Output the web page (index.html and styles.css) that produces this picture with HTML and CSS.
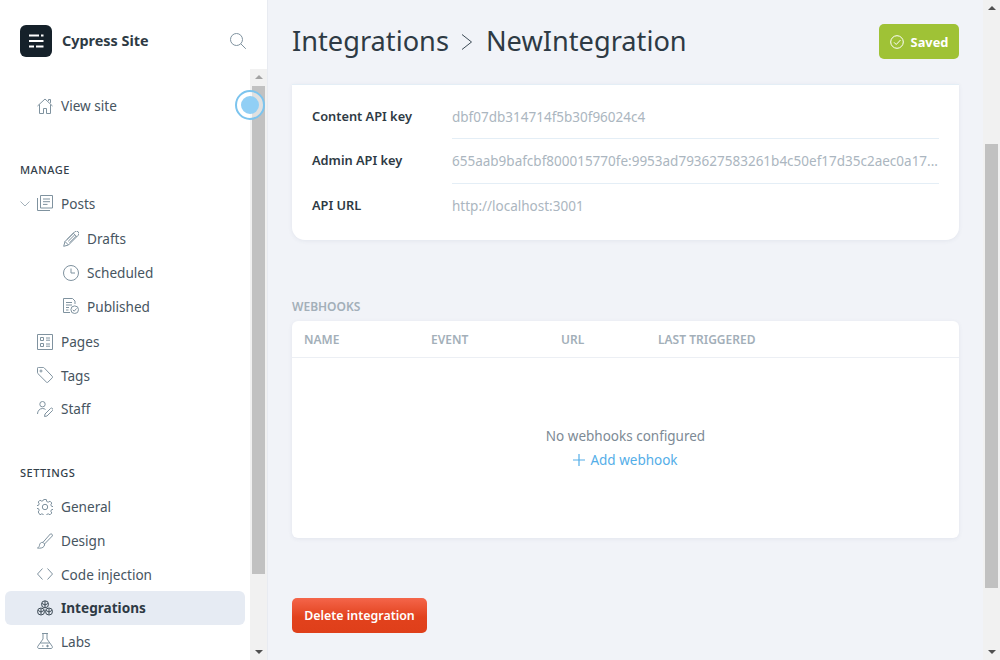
FILE: index.html
```html
<!DOCTYPE html>
<html lang="en">
<head>
<meta charset="utf-8">
<title>Integrations</title>
<link rel="stylesheet" href="styles.css">
</head>
<body>
<div class="app">
  <aside class="sidebar">
    <header class="brand">
      <div class="logo">
        <svg viewBox="0 0 32 32" width="32" height="32"><path d="M9 10.500h10M21 10.500h2.500M9 16h14.500M9 21.500h5M16 21.500h7.500" class="logo-lines"/></svg>
      </div>
      <span class="brand-name">Cypress Site</span>
      <svg class="search" viewBox="0 0 16 16" width="16" height="16"><circle cx="6.500" cy="6.500" r="6"/><path d="M10.800 10.800l5 5"/></svg>
    </header>
    <div class="side-body">
      <nav class="nav">
        <div class="item top">
          <svg class="ic" viewBox="0 0 16 16"><path d="M.5 8L8 1l7.500 7M2.500 6.500v9h4v-5h3v5h4v-9M11.500 3V1.500h2v3.400"/></svg>
          <span>View site</span>
        </div>
        <h4 class="label manage">MANAGE</h4>
        <div class="item">
          <svg class="chev" viewBox="0 0 10 6"><path d="M.5.500L5 5 9.500.5"/></svg>
          <svg class="ic" viewBox="0 0 16 16"><path d="M3.500.5h12v12.500h-12zM.5 3v12.500h12.500M6 4h7M6 6.700h7M6 9.400h4.500"/></svg>
          <span>Posts</span>
        </div>
        <div class="sub">
          <div class="item">
            <svg class="ic" viewBox="0 0 16 16"><path d="M.7 15.300l1.300-4.800L11.700.8a1.700 1.700 0 0 1 3.500 3.500L5.500 14zM2 10.500L5.500 14M10.300 2.200l3.500 3.500M3.700 8.800l6.800-6.800M5.200 10.300L12 3.500M6.500 11.800l6.800-6.800"/></svg>
            <span>Drafts</span>
          </div>
          <div class="item">
            <svg class="ic" viewBox="0 0 16 16"><circle cx="8" cy="8" r="7.500"/><path d="M8 3.500V8h4"/></svg>
            <span>Scheduled</span>
          </div>
          <div class="item">
            <svg class="ic" viewBox="0 0 16 16"><path d="M7 14.500H.5V.5h9l2.500 2.500v3M3 4.500h6M3 7h6M3 9.500h3M3 12h2.500"/><circle cx="11.700" cy="11.700" r="3.800"/><path d="M9.800 11.800l1.400 1.400 2.300-2.700"/></svg>
            <span>Published</span>
          </div>
        </div>
        <div class="item">
          <svg class="ic" viewBox="0 0 16 16"><path d="M.5.5h15v15H.5zM3.500 3.500h3v3h-3zM3.500 9.500h3v3h-3zM9 4h4M9 6.200h4M9 10h4M9 12.200h4"/></svg>
          <span>Pages</span>
        </div>
        <div class="item">
          <svg class="ic" viewBox="0 0 16 16"><path d="M.5 1.200v4.600a1 1 0 0 0 .3.700l8.700 8.700a1 1 0 0 0 1.400 0l4.400-4.400a1 1 0 0 0 0-1.400L7 .7a1 1 0 0 0-.7-.3H1.300a.8.8 0 0 0-.8.800z"/><circle cx="4" cy="4" r="1"/></svg>
          <span>Tags</span>
        </div>
        <div class="item">
          <svg class="ic" viewBox="0 0 16 16"><circle cx="5.500" cy="3.200" r="2.700"/><path d="M.5 13c0-3 2-5.500 5-5.500 1.200 0 2.200.3 3 1M7.500 15.500l.5-2.500 5.500-5.500a1.300 1.300 0 0 1 2 2L10 15z"/></svg>
          <span>Staff</span>
        </div>
        <h4 class="label settings">SETTINGS</h4>
        <div class="item">
          <svg class="ic" viewBox="0 0 16 16"><circle cx="8" cy="8" r="2.700"/><path d="M6.700.5h2.600l.4 2 1.500.7 1.800-1 1.800 1.800-1 1.800.7 1.500 2 .4v2.600l-2 .4-.7 1.500 1 1.800-1.800 1.800-1.800-1-1.500.7-.4 2H6.700l-.4-2-1.500-.7-1.800 1L1.200 13l1-1.800-.7-1.500-2-.4V6.700l2-.4.700-1.500-1-1.800L3 1.200l1.800 1 1.500-.7z"/></svg>
          <span>General</span>
        </div>
        <div class="item">
          <svg class="ic" viewBox="0 0 16 16"><path d="M6 9.300L13.300 1a1.500 1.500 0 0 1 2 2L7.500 11M6 9.300c-2.500 0-3.300 1.300-3.500 3-.1 1.200-1 2.200-2 2.700 2.500.5 5.500 0 6.500-1.700.6-1 .7-1.700.5-2.300z"/></svg>
          <span>Design</span>
        </div>
        <div class="item">
          <svg class="ic" viewBox="0 0 16 16"><path d="M5.500 2.500L.5 8l5 5.500M10.500 2.500l5 5.500-5 5.500"/></svg>
          <span>Code injection</span>
        </div>
        <div class="item active">
          <svg class="ic" viewBox="0 0 16 16"><circle cx="8" cy="4.300" r="3.500"/><circle cx="4" cy="11.500" r="3.500"/><circle cx="12" cy="11.500" r="3.500"/><path d="M8 1v6.500M5 3.500L8 5l3-1.500M4 8.500v6M1 10.500L4 12l3-1.500M12 8.500v6M9 10.500l3 1.500 3-1.500"/></svg>
          <span>Integrations</span>
        </div>
        <div class="item">
          <svg class="ic" viewBox="0 0 16 16"><path d="M5 .5h6M6 .5v5.500L.8 13.300c-.6 1 0 2.200 1.200 2.200h12c1.200 0 1.800-1.200 1.200-2.200L10 6V.5M3.400 10h9.200M5 13h1.500M9 13h3M10.500 11.700v2.600"/></svg>
          <span>Labs</span>
        </div>
      </nav>
      <div class="scrollbar">
        <div class="arrow up"></div>
        <div class="thumb side-thumb"></div>
        <div class="fill"></div>
        <div class="arrow down"></div>
      </div>
      <div class="pulse"><div class="pulse-dot"></div></div>
    </div>
  </aside>
  <main class="main">
    <header class="page-head">
      <h1 class="title">
        <span>Integrations</span>
        <svg class="crumb" viewBox="0 0 12 18" width="12" height="18"><path d="M1 1.500L10.500 9 1 16.500"/></svg>
        <span>NewIntegration</span>
      </h1>
      <div class="saved">
        <svg viewBox="0 0 14 14" width="14" height="14"><circle cx="7" cy="7" r="6.300"/><path d="M4 7.300l2.200 2.200L10.500 5"/></svg>
        <span>Saved</span>
      </div>
    </header>
    <section class="card keys">
      <div class="key-row first">
        <div class="key-name">Content API key</div>
        <div class="key-value">dbf07db314714f5b30f96024c4</div>
      </div>
      <div class="key-row">
        <div class="key-name">Admin API key</div>
        <div class="key-value">655aab9bafcbf800015770fe:9953ad793627583261b4c50ef17d35c2aec0a17...</div>
      </div>
      <div class="key-row">
        <div class="key-name">API URL</div>
        <div class="key-value">http://localhost:3001</div>
      </div>
    </section>
    <h3 class="section-label">WEBHOOKS</h3>
    <section class="card hooks">
      <div class="hooks-head">
        <div>NAME</div>
        <div>EVENT</div>
        <div>URL</div>
        <div>LAST TRIGGERED</div>
      </div>
      <div class="hooks-empty">
        <p class="empty-text">No webhooks configured</p>
        <a class="add-link">
          <svg viewBox="0 0 12 12" width="12" height="12"><path d="M6 0v12M0 6h12"/></svg>
          <span>Add webhook</span>
        </a>
      </div>
    </section>
    <button class="delete">Delete integration</button>
  </main>
  <div class="scrollbar page-bar">
    <div class="arrow up"></div>
    <div class="gap-top"></div>
    <div class="thumb page-thumb"></div>
    <div class="fill"></div>
    <div class="arrow down"></div>
  </div>
</div>
</body>
</html>
```
FILE: styles.css
```css
* { box-sizing: border-box; }
html, body { margin: 0; height: 100%; overflow: hidden; }
body { font-family: "Noto Sans", "Open Sans", sans-serif; color: #3c4a55; background: #f1f3f8; }
.app { display: flex; height: 660px; width: 1000px; }

/* Sidebar */
.sidebar { width: 268px; flex: none; background: #fff; border-right: 1px solid #e8ebf1; display: flex; flex-direction: column; }
.brand { height: 69px; flex: none; display: flex; align-items: flex-start; padding: 25px 21px 0 20px; }
.logo { width: 32px; height: 32px; border-radius: 6px; background: #15212a; }
.logo svg { display: block; }
.logo-lines { stroke: #fff; stroke-width: 2; fill: none; }
.brand-name { margin-left: 10px; font-size: 14.400px; font-weight: 700; color: #2e3a44; line-height: 32px; }
.search { margin-left: auto; margin-top: 8px; fill: none; stroke: #7f929f; stroke-width: 1; }
.side-body { flex: 1; display: flex; position: relative; min-height: 0; }
.nav { flex: 1; padding: 20px 5px 0 5px; min-width: 0; }
.item { height: 33.600px; display: flex; align-items: center; padding-left: 32px; position: relative; font-size: 13.600px; color: #47555f; border-radius: 6px; }
.item .ic { width: 16px; height: 16px; flex: none; margin-right: 8px; fill: none; stroke: #7f929f; stroke-width: 1; }
.item .chev { position: absolute; left: 15px; top: 14px; width: 10px; height: 6px; fill: none; stroke: #9aa8b2; stroke-width: .9; }
.sub { padding: 2px 0 2px 26px; }
.item.active { background: #e6ebf3; color: #2e3a44; font-weight: 700; }
.item.active .ic { stroke: #3c4a55; }
.label { margin: 0; font-size: 11px; font-weight: 500; letter-spacing: .5px; color: #33404a; padding-left: 15px; line-height: 16px; }
.manage { margin-top: 39px; margin-bottom: 9px; }
.settings { margin-top: 39.400px; margin-bottom: 9px; }

/* Scrollbars */
.scrollbar { width: 17px; flex: none; background: #f1f1f1; display: flex; flex-direction: column; align-items: center; }
.arrow { height: 17px; width: 100%; flex: none; position: relative; }
.arrow::after { content: ""; position: absolute; left: 50%; top: 6px; margin-left: -4px; border-left: 4px solid transparent; border-right: 4px solid transparent; }
.arrow.up::after { border-bottom: 4px solid #a3a3a3; }
.arrow.down::after { border-top: 4px solid #505050; top: 7px; }
.thumb { width: 13px; background: #c1c1c1; flex: none; }
.side-thumb { height: 488px; }
.fill { flex: 1; }
.page-bar .arrow.up::after { border-bottom-color: #505050; }
.gap-top { height: 127px; flex: none; }
.page-thumb { height: 444px; }
.pulse { position: absolute; left: 235px; top: 21px; width: 30px; height: 30px; border-radius: 50%; border: 2px solid #7cc4ee; background: rgba(255,255,255,.5); display: flex; align-items: center; justify-content: center; }
.pulse-dot { width: 18px; height: 18px; border-radius: 50%; background: #91cff5; }

/* Main */
.main { flex: 1; min-width: 0; padding: 0 24px; display: flex; flex-direction: column; align-items: stretch; }
.page-head { height: 84px; flex: none; display: flex; align-items: flex-start; justify-content: space-between; }
.title { margin: 19px 0 0; font-size: 27.200px; font-weight: 400; line-height: 44px; color: #2e3a44; display: flex; align-items: center; gap: 12.500px; }
.crumb { fill: none; stroke: #3c4a55; stroke-width: 1; margin-top: 2px; }
.saved { margin-top: 24px; width: 80px; height: 35px; border-radius: 5px; background: #9fc236; color: #fff; font-size: 12.800px; font-weight: 700; display: flex; align-items: center; justify-content: center; gap: 7px; }
.saved svg { fill: none; stroke: #fff; stroke-width: 1; }
.card { background: #fff; box-shadow: 0 1px 4px rgba(60,80,110,.08); }
.keys { height: 156px; border-top: 1px solid #e4eef6; border-radius: 0 0 13px 13px; padding: 8px 20px 0; }
.key-row { display: flex; height: 44.800px; align-items: center; }
.key-row.first { padding-top: 2px; }
.key-row + .key-row .key-value { border-top: 1px solid #e4eef6; }
.key-name { width: 140px; flex: none; font-size: 12.800px; font-weight: 600; color: #2e3a44; }
.key-value { flex: 1; min-width: 0; height: 100%; line-height: 44px; font-size: 13.500px; color: #abb6c0; white-space: nowrap; }
.section-label { margin: 59px 0 0; height: 22px; line-height: 16px; font-size: 12px; font-weight: 600; color: #a3afb9; }
.hooks { height: 217px; border-radius: 6px; display: flex; flex-direction: column; }
.hooks-head { height: 37px; flex: none; display: grid; grid-template-columns: 127px 130px 97px 1fr; align-items: center; padding-left: 12px; border-bottom: 1px solid #eceff4; font-size: 12px; font-weight: 600; color: #a3afb9; }
.hooks-empty { flex: 1; display: flex; flex-direction: column; align-items: center; padding-top: 66px; }
.empty-text { margin: 0; font-size: 13.500px; line-height: 24px; color: #7d8a95; }
.add-link { display: flex; align-items: center; gap: 5px; font-size: 13.500px; line-height: 24px; color: #54aee8; }
.add-link svg { stroke: #54aee8; fill: none; stroke-width: 1.200; }
.delete { margin-top: 60px; width: 135px; height: 35px; flex: none; border: 0; padding: 0; border-radius: 5px; background: linear-gradient(#f4654a, #e2421d 55%, #df3f1a); color: #fff; font-family: inherit; font-size: 12.400px; font-weight: 600; }
```
